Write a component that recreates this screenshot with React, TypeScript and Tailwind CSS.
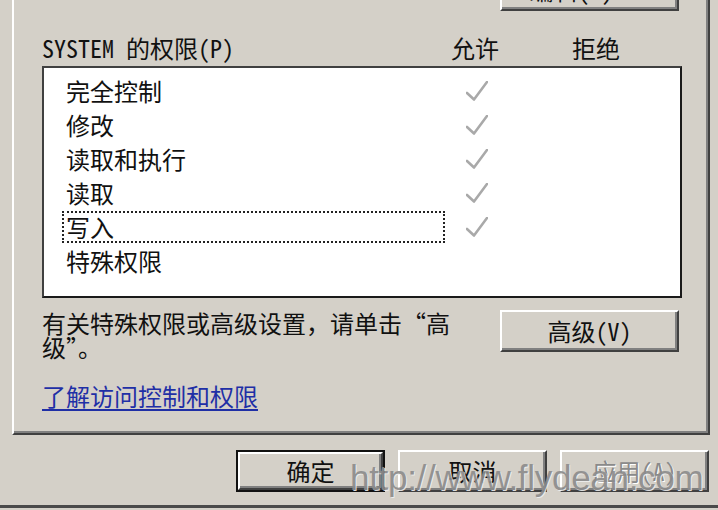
import clsx from "clsx";

const perms = [
  { name: "完全控制", allow: true },
  { name: "修改", allow: true },
  { name: "读取和执行", allow: true },
  { name: "读取", allow: true },
  { name: "写入", allow: true, focused: true },
  { name: "特殊权限", allow: false },
];

function Check() {
  return (
    <svg width="22" height="20" viewBox="0 0 22 20" className="shrink-0">
      <polyline points="1,12 8,18.5 21,1" fill="none" stroke="#a9a9a9" strokeWidth="2.6" strokeLinejoin="round" strokeLinecap="round" />
    </svg>
  );
}

function Btn({
  children,
  className,
  isDefault,
  disabled,
}: {
  children: React.ReactNode;
  className?: string;
  isDefault?: boolean;
  disabled?: boolean;
}) {
  return (
    <div className={clsx("h-[42px] w-[149px] shrink-0", isDefault && "border-2 border-[#111]", className)}>
      <div className="flex h-full w-full items-center justify-center border-2 border-t-white border-l-white border-r-[#404040] border-b-[#404040] shadow-[inset_-2px_-2px_0_#808080]">
        <span
          className={clsx(
            "leading-[24px]",
            disabled ? "text-[#8a8a8a] [text-shadow:1px_1px_0_#ffffff]" : "text-[#111]"
          )}
        >
          {children}
        </span>
      </div>
    </div>
  );
}

export default function App() {
  return (
    <div className="relative h-[510px] w-[718px] overflow-hidden bg-[#d4d0c8] font-['Noto_Sans_Mono_CJK_SC','Noto_Sans_CJK_SC',sans-serif] text-[24px] text-[#111]">
      {/* Tab panel */}
      <div className="ml-[12px] w-[698px] border-l-2 border-r-2 border-b-2 border-l-white border-r-[#404040] border-b-[#404040] pl-[28px] pr-[26px] pb-[25px] shadow-[inset_-2px_-2px_0_#808080]">
        <div className="-mt-[31px] flex justify-end">
          <Btn className="mr-[3px] w-[179px]">编辑(E)...</Btn>
        </div>

        {/* Header */}
        <div className="mt-[25px] flex h-[24px] leading-[24px]">
          <div className="w-[409px]">SYSTEM 的权限(P)</div>
          <div className="w-[121px]">允许</div>
          <div>拒绝</div>
        </div>

        {/* Permissions list */}
        <div className="mt-[6px] h-[232px] w-[640px] border-2 border-t-[#404040] border-l-[#404040] border-r-[#1a1a1a] border-b-[#1a1a1a] bg-white pl-[18px] pt-[6px]">
          {perms.map((p) => (
            <div key={p.name} className="flex h-[34px] items-center">
              <div
                className={clsx(
                  "flex h-[32px] w-[383px] items-center pl-[2px] leading-[24px]",
                  p.focused ? "border-2 border-dotted border-[#222]" : "border-2 border-transparent"
                )}
              >
                {p.name}
              </div>
              <div className="ml-[21px]">{p.allow && <Check />}</div>
            </div>
          ))}
        </div>

        {/* Advanced */}
        <div className="mt-[12px] flex items-start justify-between">
          <p className="pt-[1px] leading-[24px]">
            有关特殊权限或高级设置，请单击“高
            <br />
            级”。
          </p>
          <Btn className="mr-[3px] w-[179px]">高级(V)</Btn>
        </div>

        <a className="mt-[25px] block w-fit leading-[24px] text-[#1f2fa6] underline underline-offset-[3px]">
          了解访问控制和权限
        </a>
      </div>

      {/* Dialog buttons */}
      <div className="mt-[15px] flex gap-[13px] pl-[236px]">
        <Btn isDefault>确定</Btn>
        <Btn>取消</Btn>
        <Btn disabled>应用(A)</Btn>
      </div>

      <div className="mt-[13px] h-[3px] bg-[#4a4a4a]" />

      {/* Watermark */}
      <div className="pointer-events-none absolute left-[350px] top-[460px] font-['Liberation_Sans',sans-serif] text-[35px] leading-[35px] tracking-[-0.3px] text-[#8c8c8c] opacity-90 [text-shadow:1px_1px_0_#eeeeee]">
        http://www.flydean.com
      </div>
    </div>
  );
}
